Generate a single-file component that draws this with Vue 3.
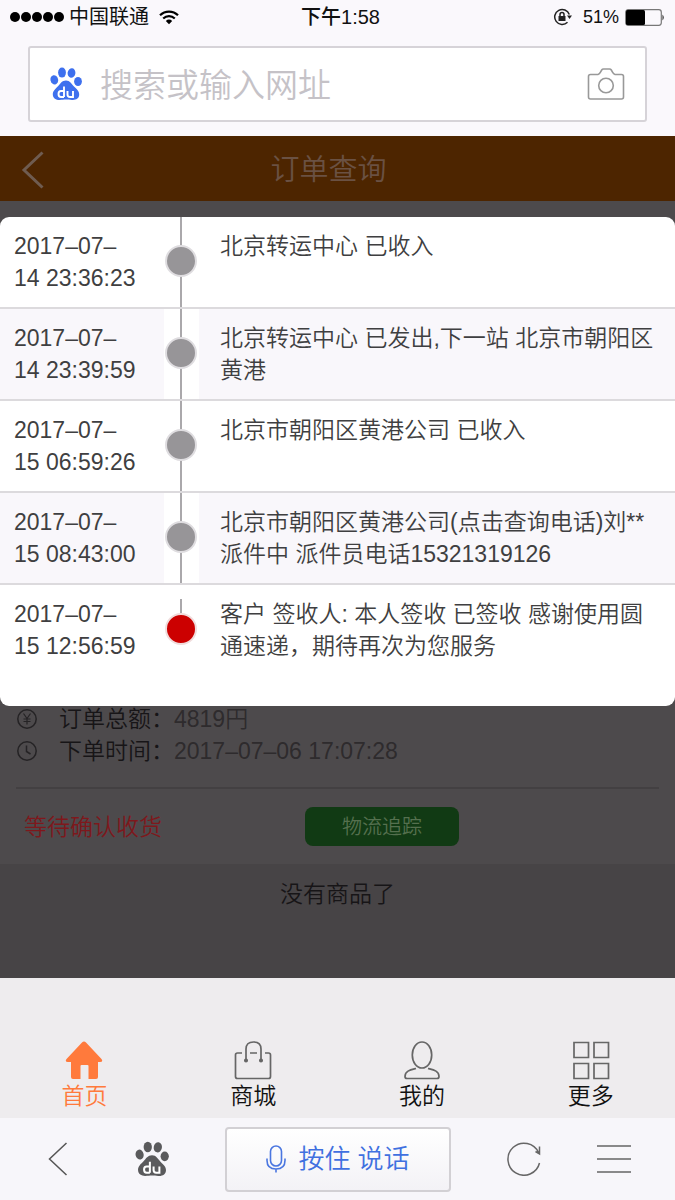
<script setup>
const records = [
  { time: '2017–07–14 23:36:23', text: '北京转运中心 已收入' },
  { time: '2017–07–14 23:39:59', text: '北京转运中心 已发出,下一站 北京市朝阳区黄港' },
  { time: '2017–07–15 06:59:26', text: '北京市朝阳区黄港公司 已收入' },
  { time: '2017–07–15 08:43:00', text: '北京市朝阳区黄港公司(点击查询电话)刘** 派件中 派件员电话15321319126' },
  { time: '2017–07–15 12:56:59', text: '客户 签收人: 本人签收 已签收 感谢使用圆通速递，期待再次为您服务' },
]
</script>

<template>
  <div class="screen">
    <header class="status">
      <div class="status-side">
        <span class="signal"><i v-for="n in 5" :key="n"></i></span>
        <span>中国联通</span>
        <svg class="wifi" width="20" height="15" viewBox="0 0 20 15" fill="none" stroke="#000" stroke-width="2.2">
          <path d="M1 5.200C6 .3 14 .3 19 5.200M4.200 8.500C7.500 5.300 12.500 5.300 15.800 8.500" />
          <path d="M6.800 11Q10 8.200 13.200 11L10 14.200Z" fill="#000" stroke="none" />
        </svg>
      </div>
      <time class="clock">下午1:58</time>
      <div class="status-side right">
        <svg width="19" height="18" viewBox="0 0 19 18" fill="none" stroke="#222" stroke-width="1.500">
          <path d="M16.300 6.500A7.500 7.500 0 1 0 14.500 14.300" />
          <path d="M14 7.500h5l-2.500 3.500z" fill="#222" stroke="none" />
          <rect x="5.500" y="8" width="7" height="5" fill="#222" stroke="none" />
          <path d="M7 8V6.500a2 2 0 0 1 4 0V8" />
        </svg>
        <span class="percent">51%</span>
        <svg width="40" height="17" viewBox="0 0 40 17">
          <rect x=".7" y=".7" width="35.600" height="15.600" rx="2.500" fill="none" stroke="#777" stroke-width="1.200" />
          <rect x="1" y="1" width="19" height="15" rx="1.500" fill="#000" />
          <path d="M37.500 5.500q2.500 3 0 6z" fill="#222" />
        </svg>
      </div>
    </header>

    <form class="search" @submit.prevent>
      <svg class="paw" width="32" height="34" viewBox="0 0 32 34" fill="#3e70ee">
        <ellipse cx="4.300" cy="12.800" rx="3.800" ry="4.700" transform="rotate(-12 4.300 12.800)" />
        <ellipse cx="12" cy="5.600" rx="3.900" ry="5" />
        <ellipse cx="21.500" cy="6" rx="3.900" ry="4.800" transform="rotate(10 21.500 6)" />
        <ellipse cx="28" cy="14.500" rx="3.900" ry="4.600" />
        <path d="M16 13.500c4 0 5.500 3.500 8 6 3 3 5.500 5 5.200 8.500-.4 4.500-4.700 5-7.200 5-2.500 0-4-.4-6-.4s-4 .4-6.500.4C6 33 3 31.500 2.800 27.500c-.2-3.500 3-6 5.200-8.300 2.500-2.700 4-5.700 8-5.700z" />
        <path d="M14 19.500v10.500M14 24h-3q-2.500 0-2.500 3t2.500 3h3M17.500 24v3.500q0 2.500 2.500 2.500H23V24" fill="none" stroke="#fff" stroke-width="1.900" />
      </svg>
      <input type="text" aria-label="搜索或输入网址" placeholder="搜索或输入网址" />
      <button class="icon-btn" type="button" aria-label="拍照">
        <svg width="38" height="34" viewBox="0 0 38 34" fill="none" stroke="#999" stroke-width="1.600">
          <path d="M3.500 7.500h7.500q1.500-.3 2.500-2.300l1.200-2.200q.6-1 1.800-1h6q1.200 0 1.800 1l1.200 2.200q1 2 2.500 2.300h6.500q2 0 2 2v20.500q0 2-2 2h-31q-2 0-2-2V9.500q0-2 2-2z" />
          <circle cx="19" cy="18.500" r="7.300" />
        </svg>
      </button>
    </form>

    <main class="page">
      <div class="titlebar">
        <button class="icon-btn" type="button" aria-label="返回">
          <svg width="24" height="38" viewBox="0 0 24 38" fill="none" stroke="#6f5c50" stroke-width="3">
            <path d="M21.500 1.500L3 19l18.500 17.500" />
          </svg>
        </button>
        <h1>订单查询</h1>
      </div>

      <section class="dialog" role="dialog" aria-label="物流追踪">
        <table>
          <tbody>
            <tr v-for="(r, i) in records" :key="r.time" :class="{ last: i === records.length - 1 }">
              <td class="time">{{ r.time }}</td>
              <td class="mark"><span class="line"></span><span class="dot"></span></td>
              <td class="text">{{ r.text }}</td>
            </tr>
          </tbody>
        </table>
      </section>

      <section class="order">
        <dl>
          <div class="info">
            <svg width="22" height="22" viewBox="0 0 22 22" fill="none" stroke="#252325" stroke-width="1.500">
              <circle cx="11" cy="11" r="9.200" />
              <path d="M7.500 5.500l3.500 5 3.500-5M11 10.500v6M7.500 11h7M7.500 13.500h7" stroke-width="1.200" />
            </svg>
            <dt>订单总额：</dt>
            <dd>4819円</dd>
          </div>
          <div class="info">
            <svg width="22" height="22" viewBox="0 0 22 22" fill="none" stroke="#252325" stroke-width="1.500">
              <circle cx="11" cy="11" r="9.200" />
              <path d="M10.500 5.500v6l4 2.500" />
            </svg>
            <dt>下单时间：</dt>
            <dd>2017–07–06 17:07:28</dd>
          </div>
        </dl>
        <div class="actions">
          <span class="state">等待确认收货</span>
          <button class="track" type="button">物流追踪</button>
        </div>
      </section>
      <p class="empty">没有商品了</p>
    </main>

    <nav class="tabs">
      <a href="#home" class="active">
        <svg width="38" height="40" viewBox="0 0 38 40" fill="#ff7a3c">
          <path d="M17 2.500q2-2 4 0L36.500 19q2 3-1.500 3H33v15q0 2-2 2h-7.500V26q0-1-1-1h-6q-1 0-1 1v13H8q-2 0-2-2V22H3q-3.500 0-1.500-3z" />
        </svg>
        <span>首页</span>
      </a>
      <a href="#mall">
        <svg width="38" height="40" viewBox="0 0 38 40" fill="none" stroke="#666" stroke-width="1.700">
          <path d="M8 13H3.500q-2 0-2 2v21.500q0 2 2 2h31q2 0 2-2V15q0-2-2-2H31M16 13h7" />
          <path d="M12 20V9q0-7 7.500-7T27 9v11" />
          <circle cx="12" cy="20.500" r="1.200" fill="#666" />
          <circle cx="27" cy="20.500" r="1.200" fill="#666" />
        </svg>
        <span>商城</span>
      </a>
      <a href="#mine">
        <svg width="38" height="40" viewBox="0 0 38 40" fill="none" stroke="#666" stroke-width="1.700">
          <ellipse cx="19" cy="15" rx="9.700" ry="13" />
          <path d="M13 28.500C7 30 2 31 2 36.500q0 2 2 2h30q2 0 2-2c0-5.500-5-6.500-11-8" />
        </svg>
        <span>我的</span>
      </a>
      <a href="#more">
        <svg width="38" height="40" viewBox="0 0 38 40" fill="none" stroke="#666" stroke-width="1.700">
          <path d="M2 2.500h14.500v15H2zM22 2.500h14.500v15H22zM2 23.500h14.500v15H2zM22 23.500h14.500v15H22z" />
        </svg>
        <span>更多</span>
      </a>
    </nav>

    <footer class="browser">
      <button class="icon-btn back" type="button" aria-label="后退">
        <svg width="20" height="34" viewBox="0 0 20 34" fill="none" stroke="#555" stroke-width="1.500">
          <path d="M18.500 1L1.500 17l17 16" />
        </svg>
      </button>
      <button class="icon-btn" type="button" aria-label="百度首页">
        <svg width="34" height="36" viewBox="0 0 32 34" fill="#5a5a5c">
          <ellipse cx="4.300" cy="12.800" rx="3.800" ry="4.700" transform="rotate(-12 4.300 12.800)" />
          <ellipse cx="12" cy="5.600" rx="3.900" ry="5" />
          <ellipse cx="21.500" cy="6" rx="3.900" ry="4.800" transform="rotate(10 21.500 6)" />
          <ellipse cx="28" cy="14.500" rx="3.900" ry="4.600" />
          <path d="M16 13.500c4 0 5.500 3.500 8 6 3 3 5.500 5 5.200 8.500-.4 4.500-4.700 5-7.200 5-2.500 0-4-.4-6-.4s-4 .4-6.500.4C6 33 3 31.500 2.800 27.500c-.2-3.500 3-6 5.200-8.300 2.500-2.700 4-5.700 8-5.700z" />
          <path d="M14 19.500v10.500M14 24h-3q-2.500 0-2.500 3t2.500 3h3M17.500 24v3.500q0 2.500 2.500 2.500H23V24" fill="none" stroke="#fff" stroke-width="1.900" />
        </svg>
      </button>
      <button class="voice" type="button">
        <svg width="20" height="28" viewBox="0 0 20 28" fill="none" stroke="#4a76e0" stroke-width="1.600">
          <rect x="4.500" y="1" width="11" height="20" rx="5.500" />
          <path d="M1 13.500v2q0 8.500 9 8.500t9-8.500v-2M10 24v3.500" />
        </svg>
        按住 说话
      </button>
      <button class="icon-btn" type="button" aria-label="刷新">
        <svg width="34" height="34" viewBox="0 0 34 34" fill="none" stroke="#666" stroke-width="1.500">
          <path d="M32.500 21A16 16 0 1 1 31.500 10.500M32.500 4.500v7.500l-4-2.500" />
        </svg>
      </button>
      <button class="icon-btn" type="button" aria-label="菜单">
        <svg width="34" height="30" viewBox="0 0 34 30" fill="none" stroke="#666" stroke-width="1.700">
          <path d="M0 2h34M0 15h34M0 28h34" />
        </svg>
      </button>
    </footer>
  </div>
</template>

<style>
body {
  margin: 0;
}
</style>

<style scoped>
* {
  box-sizing: border-box;
}
.screen {
  display: flex;
  flex-direction: column;
  min-height: 100vh;
  background: #faf8fc;
  color: #3f3f41;
  font-family: "Liberation Sans", "Noto Sans CJK SC", sans-serif;
  font-size: 23px;
  font-weight: 350;
  line-height: 32px;
}
button,
input {
  font: inherit;
}
svg {
  display: block;
  flex: none;
}
.status {
  display: flex;
  align-items: center;
  height: 34px;
  padding: 0 10px;
  font-size: 20px;
  font-weight: 400;
  line-height: 34px;
  color: #111;
}
.status-side {
  flex: 1;
  display: flex;
  align-items: center;
}
.status-side.right {
  justify-content: flex-end;
}
.signal {
  display: flex;
  gap: 1px;
  margin-right: 5px;
}
.signal i {
  width: 10px;
  height: 10px;
  border-radius: 50%;
  background: #000;
}
.wifi {
  margin-left: 10px;
}
.clock {
  padding-left: 6px;
  font-weight: 500;
}
.percent {
  margin: 0 6px 0 11px;
  font-size: 18px;
}
.search {
  display: flex;
  align-items: center;
  height: 76px;
  margin: 12px 28px 14px;
  padding: 0 20px;
  border: 2px solid #d6d3d8;
  border-radius: 3px;
  background: #fff;
}
.search input {
  flex: 1;
  min-width: 0;
  margin: 0 18px;
  padding: 4px 0 0;
  border: 0;
  outline: 0;
  background: none;
  font-size: 33px;
  line-height: 48px;
}
.search input::placeholder {
  color: #c5c2c7;
  opacity: 1;
}
.icon-btn {
  display: flex;
  align-items: center;
  justify-content: center;
  padding: 0;
  border: 0;
  background: none;
}
.page {
  position: relative;
  display: flex;
  flex-direction: column;
  flex: 1;
  background: #474446;
}
.titlebar {
  display: grid;
  grid-template-columns: 24px 1fr 24px;
  align-items: center;
  height: 65px;
  padding: 2px 39px 0 21px;
  background: #4d2500;
}
.titlebar h1 {
  margin: 0;
  font-size: 29px;
  font-weight: 350;
  line-height: 40px;
  text-align: center;
  color: #6a5143;
}
.dialog {
  position: absolute;
  top: 81px;
  left: 0;
  right: 0;
  overflow: hidden;
  border-radius: 9px;
  background: #fff;
}
table {
  width: 100%;
  border-collapse: separate;
  border-spacing: 0;
  table-layout: fixed;
}
td {
  height: 92px;
  padding: 13px 0;
  border-bottom: 2px solid #dcdadd;
  vertical-align: top;
}
tr:nth-child(even) td {
  background: #f9f7fb;
}
tr:nth-child(even) .mark {
  background: #fff;
}
.last td {
  height: 121px;
  border-bottom: 0;
}
.time {
  width: 164px;
  padding-left: 14px;
  padding-right: 26px;
}
.mark {
  position: relative;
  width: 35px;
}
.text {
  padding-left: 21px;
  padding-right: 18px;
}
.line {
  position: absolute;
  top: 0;
  bottom: 0;
  left: 16px;
  width: 2px;
  background: #aaa8ab;
}
.dot {
  position: absolute;
  top: 28px;
  left: 1px;
  width: 32px;
  height: 32px;
  border: 2px solid #dfdde0;
  border-radius: 50%;
  background: #979598;
}
.last .line {
  top: 14px;
  bottom: auto;
  height: 15px;
}
.last .dot {
  border-color: #f0dcdc;
  background: #cc0000;
}
.order {
  padding: 502px 16px 0;
  background: #4d4a4c;
}
dl {
  margin: 0;
  padding-bottom: 20px;
  border-bottom: 2px solid #434042;
}
.info {
  display: flex;
  align-items: center;
}
dt {
  margin-left: 21px;
  color: #171517;
}
dd {
  margin: 0;
  color: #2e2b2d;
}
.actions {
  display: grid;
  grid-template-columns: 281px 154px;
  align-items: center;
  padding: 18px 8px;
}
.state {
  color: #7e181c;
}
.track {
  height: 39px;
  padding: 0;
  border: 0;
  border-radius: 8px;
  background: #113a14;
  color: #55704f;
  font-size: 20px;
}
.empty {
  margin: 0;
  padding: 14px 0 68px;
  text-align: center;
  color: #171517;
}
.tabs {
  display: grid;
  grid-template-columns: repeat(4, 1fr);
  padding: 62px 0 6px;
  background: #eeecee;
}
.tabs a {
  display: flex;
  flex-direction: column;
  align-items: center;
  color: #111;
  text-decoration: none;
}
.tabs a.active {
  color: #ff7a3c;
}
.browser {
  display: flex;
  align-items: center;
  gap: 56px;
  height: 82px;
  padding: 0 44px 0 48px;
  background: #f7f6fa;
}
.back {
  padding-right: 11px;
}
.voice {
  flex: 1;
  display: flex;
  align-items: center;
  justify-content: center;
  gap: 12px;
  height: 65px;
  padding: 0;
  border: 2px solid #d2d0d4;
  border-radius: 4px;
  background: linear-gradient(#fff, #f3f2f6);
  color: #4070e0;
  font-size: 26px;
}
</style>
